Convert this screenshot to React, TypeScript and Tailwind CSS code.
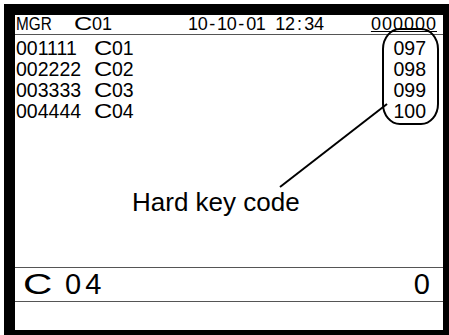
import React from "react";

const rows = [
  { id: "001111", clerk: "01", code: "097" },
  { id: "002222", clerk: "02", code: "098" },
  { id: "003333", clerk: "03", code: "099" },
  { id: "004444", clerk: "04", code: "100" },
];

// wide "C" used by the register display for the clerk prefix
const WideC: React.FC<{ box: string; scale: string }> = ({ box, scale }) => (
  <span className={`inline-block ${box}`}>
    <span className={`inline-block origin-left ${scale}`}>C</span>
  </span>
);

export default function App() {
  const date = "10-10-01 12:34".split("");

  return (
    <div className="w-[449px] h-[335px] overflow-hidden bg-white font-['Liberation_Sans',Arial,sans-serif] text-black">
      <div className="ml-[4px] mt-[4px] w-[450px] h-[337px] border-[11px] border-black flex flex-col relative">
        {/* Header */}
        <div className="h-[20px] border-b border-[#555] flex items-center text-[18px] leading-[19px] pl-[1px] pr-[6px]">
          <span className="w-[58px]">
            <span className="inline-block origin-left scale-x-[0.85]">MGR</span>
          </span>
          <span className="w-[114px] flex">
            <WideC box="w-[18px]" scale="scale-x-[1.4]" />
            01
          </span>
          <span className="flex">
            {date.map((ch, i) => (
              <span key={i} className="w-[9.7px] text-center">
                {ch}
              </span>
            ))}
          </span>
          <span className="ml-auto underline underline-offset-[1px] tracking-[1px]">000000</span>
        </div>

        {/* Rows */}
        <div className="pt-[3px] pl-[1px] pr-[17px] text-[19.5px] leading-[21px]">
          {rows.map((r) => (
            <div key={r.id} className="flex">
              <span className="w-[78px]">{r.id}</span>
              <WideC box="w-[18px]" scale="scale-x-[1.3]" />
              <span>{r.clerk}</span>
              <span className="ml-auto">{r.code}</span>
            </div>
          ))}
        </div>

        <div className="flex-1" />

        {/* Total line */}
        <div className="border-t border-b border-[#555] h-[35px] flex items-center pl-[8px] pr-[13px] text-[29px] leading-[33px]">
          <WideC box="w-[42px]" scale="scale-x-[1.4]" />
          <span className="tracking-[4px]">04</span>
          <span className="ml-auto">0</span>
        </div>
        <div className="h-[28px]" />

        {/* Callout annotation */}
        <svg className="absolute left-0 top-0 pointer-events-none" width="440" height="320" viewBox="0 0 440 320">
          <rect x="368" y="14" width="55" height="95" rx="17" ry="20" fill="none" stroke="#000" strokeWidth="2" />
          <line x1="265" y1="172" x2="372" y2="89" stroke="#000" strokeWidth="2" />
        </svg>
        <span className="absolute left-[117px] top-[172px] text-[26px] leading-[30px]">Hard key code</span>
      </div>
    </div>
  );
}
